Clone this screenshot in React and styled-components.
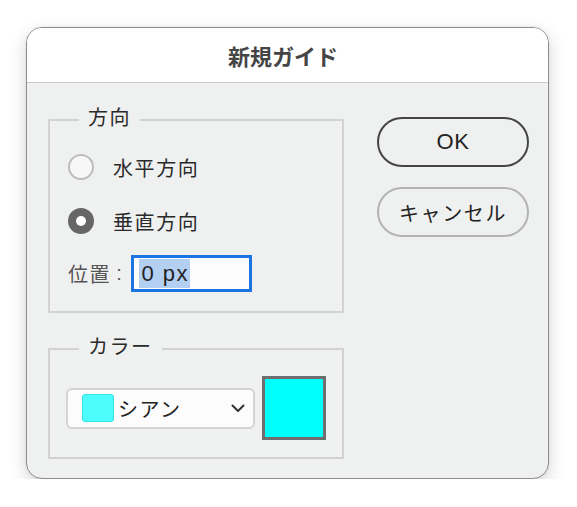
import React from "react";
import styled, { createGlobalStyle } from "styled-components";

const Global = createGlobalStyle`
  html, body { margin: 0; padding: 0; background: #ffffff; }
  body { font-family: "Noto Sans CJK JP", "Liberation Sans", sans-serif; color: #2a2a2a; }
  * { box-sizing: border-box; }
`;

const CJK = `"Liberation Sans", "Noto Sans CJK JP", sans-serif`;

const Dialog = styled.div`
  margin: 27px 0 0 26px;
  width: 523px;
  height: 452px;
  border: 1px solid #8c8c8c;
  border-radius: 16px;
  background: #eff0f0;
  box-shadow: 0 6px 18px rgba(0, 0, 0, 0.16), 0 0 4px rgba(0, 0, 0, 0.06);
  overflow: hidden;
  display: flex;
  flex-direction: column;
`;

const TitleBar = styled.div`
  height: 55px;
  flex: none;
  background: #ffffff;
  border-bottom: 1px solid #cacaca;
  display: flex;
  align-items: center;
  justify-content: center;
  padding-right: 9px;
  font-family: ${CJK};
  font-weight: bold;
  font-size: 22px;
  letter-spacing: 0px;
  color: #454545;
`;

const Body = styled.div`
  flex: 1;
  display: grid;
  grid-template-columns: 296px 152px;
  column-gap: 33px;
  padding: 25px 0 0 21px;
  align-items: start;
`;

const LeftCol = styled.div`
  display: flex;
  flex-direction: column;
  gap: 24px;
`;

const Group = styled.fieldset`
  margin: 0;
  padding: 0;
  border: 2px solid #d2d2d2;
  border-radius: 1px;
  min-width: 0;
`;

const Legend = styled.legend`
  margin-left: 29px;
  padding: 0 9px 0 9px;
  font-family: ${CJK};
  font-size: 20px;
  line-height: 24px;
  letter-spacing: 1.5px;
  color: #2a2a2a;
`;

const LegendText = styled.span`
  position: relative;
  top: -2px;
`;

const DirectionBody = styled.div`
  display: flex;
  flex-direction: column;
  padding: 17px 0 19px 18px;
`;

const RadioRow = styled.div`
  height: 36px;
  display: flex;
  align-items: center;
  gap: 19px;
  margin-bottom: ${(p) => p.$mb || 0}px;
  font-family: ${CJK};
  font-size: 20px;
  letter-spacing: 1.6px;
  color: #2a2a2a;
`;

const Radio = styled.span`
  width: 26px;
  height: 26px;
  border-radius: 50%;
  flex: none;
  display: flex;
  align-items: center;
  justify-content: center;
  background: ${(p) => (p.$checked ? "#666666" : "#f7f7f7")};
  border: ${(p) => (p.$checked ? "none" : "2px solid #bdbdbd")};
  &::after {
    content: "";
    display: ${(p) => (p.$checked ? "block" : "none")};
    width: 10px;
    height: 10px;
    border-radius: 50%;
    background: #ffffff;
  }
`;

const PositionRow = styled.div`
  display: flex;
  align-items: center;
  height: 37px;
  font-family: ${CJK};
  font-size: 20px;
  letter-spacing: 1.6px;
  color: #555555;
`;

const Colon = styled.span`
  margin: 0 8px 0 5px;
`;

const Field = styled.div`
  width: 121px;
  height: 37px;
  border: 3px solid #1d74e5;
  background: #fdfdfd;
  display: flex;
  align-items: center;
  padding-left: 5px;
`;

const Selected = styled.span`
  background: #b3cff2;
  font-family: "Liberation Sans", sans-serif;
  font-size: 22px;
  letter-spacing: 1.5px;
  line-height: 29px;
  padding: 0 1px 0 2px;
  color: #222;
`;

const ColorBody = styled.div`
  display: flex;
  align-items: center;
  gap: 7px;
  padding: 15px 0 17px 16px;
`;

const Select = styled.div`
  width: 189px;
  height: 41px;
  background: #fcfcfc;
  border: 2px solid #d4d4d4;
  border-radius: 6px;
  display: flex;
  align-items: center;
  padding: 0 8px 0 14px;
  font-family: ${CJK};
  font-size: 20px;
  letter-spacing: 1.4px;
  color: #222;
`;

const SmallSwatch = styled.span`
  width: 32px;
  height: 28px;
  border-radius: 3px;
  background: ${(p) => p.$color};
  border: 1px solid #36e4e4;
  margin-right: 4px;
  flex: none;
`;

const SelectLabel = styled.span`
  flex: 1;
`;

const BigSwatch = styled.div`
  width: 64px;
  height: 64px;
  background: ${(p) => p.$color};
  border: 3px solid #6e6e6e;
`;

const RightCol = styled.div`
  display: flex;
  flex-direction: column;
  gap: 20px;
  padding-top: 9px;
`;

const Button = styled.button`
  width: 152px;
  height: 50px;
  border-radius: 25px;
  background: #eff0f0;
  border: 2px solid ${(p) => (p.$primary ? "#444444" : "#b3b3b3")};
  font-family: ${CJK};
  font-size: ${(p) => (p.$primary ? 22 : 20)}px;
  letter-spacing: ${(p) => (p.$primary ? 0.5 : 1.6)}px;
  color: #222;
  padding: 0;
  display: flex;
  align-items: center;
  justify-content: center;
`;

const Chevron = () => (
  <svg width="14" height="9" viewBox="0 0 14 9">
    <polyline points="1.5,1.5 7,7 12.5,1.5" fill="none" stroke="#333" strokeWidth="2" strokeLinecap="round" strokeLinejoin="round" />
  </svg>
);

export default function App() {
  return (
    <>
      <Global />
      <Dialog>
        <TitleBar>新規ガイド</TitleBar>
        <Body>
          <LeftCol>
            <Group>
              <Legend><LegendText>方向</LegendText></Legend>
              <DirectionBody>
                <RadioRow $mb={18}>
                  <Radio />
                  水平方向
                </RadioRow>
                <RadioRow $mb={16}>
                  <Radio $checked />
                  垂直方向
                </RadioRow>
                <PositionRow>
                  位置<Colon>:</Colon>
                  <Field>
                    <Selected>0 px</Selected>
                  </Field>
                </PositionRow>
              </DirectionBody>
            </Group>
            <Group>
              <Legend><LegendText>カラー</LegendText></Legend>
              <ColorBody>
                <Select>
                  <SmallSwatch $color="#4dfdfd" />
                  <SelectLabel>シアン</SelectLabel>
                  <Chevron />
                </Select>
                <BigSwatch $color="#00ffff" />
              </ColorBody>
            </Group>
          </LeftCol>
          <RightCol>
            <Button $primary>OK</Button>
            <Button>キャンセル</Button>
          </RightCol>
        </Body>
      </Dialog>
    </>
  );
}
